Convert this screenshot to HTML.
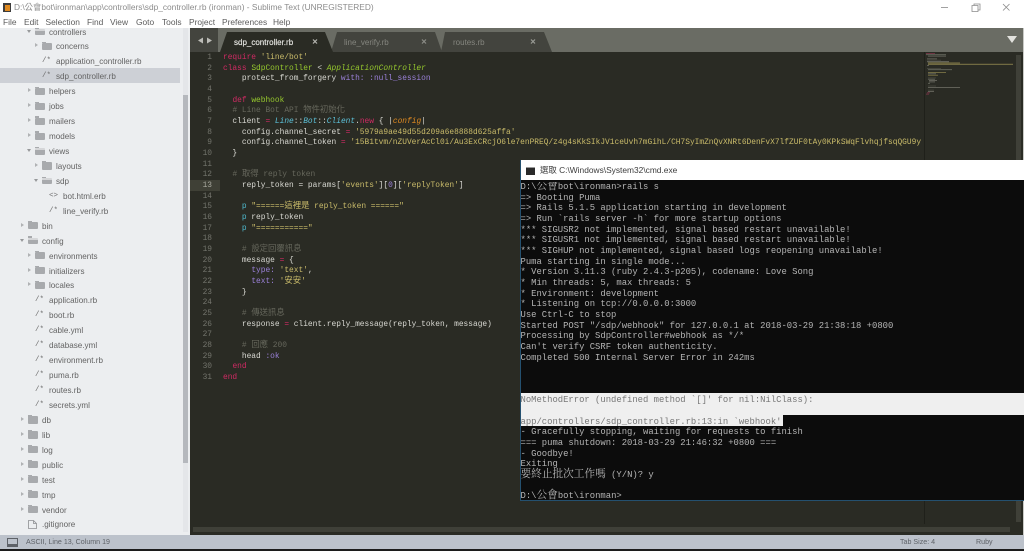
<!DOCTYPE html>
<html><head><meta charset="utf-8"><title>Sublime Text</title>
<style>
html,body{margin:0;padding:0;background:#1c1c1c}
#w{position:relative;width:1024px;height:551px;overflow:hidden;filter:blur(.3px);background:#1c1c1c;font-family:"Liberation Sans","Noto Sans CJK TC",sans-serif}
.a{position:absolute}
#title{left:0;top:0;width:1024px;height:28px;background:#fff}
.m{position:absolute;top:16.500px;font-size:8.4px;line-height:11px;color:#5c5c5c}
#side{left:0;top:28px;width:190px;height:507px;background:#eceef0;overflow:hidden}
#sl{position:absolute;left:0;top:-4.5px;width:190px;font-size:8.1px;color:#636363}
.r{position:relative;height:14.94px;line-height:17.9px;padding-left:var(--x);white-space:pre}
.g{position:absolute;left:calc(var(--x) - 14px);top:0;font-family:"Liberation Mono",monospace;font-size:7.5px;color:#6c6c6c}
.fd{position:absolute;left:calc(var(--x) - 14px);top:4.5px;width:9.5px;height:7.2px;background:#a8aaad;border-radius:1px}
.fd:before{content:"";position:absolute;left:0;top:-1.2px;width:4px;height:1.5px;background:#a8aaad}
.fo{position:absolute;left:calc(var(--x) - 14px);top:5px;width:9.5px;height:6.5px;background:linear-gradient(#d5d6d8 30%,#a8aaad 30%);border-radius:1px}
.fo:before{content:"";position:absolute;left:0;top:-1.2px;width:4px;height:1.5px;background:#a8aaad}
.tr{position:absolute;left:calc(var(--x) - 21.5px);top:5px;border-left:3.5px solid #b0b2b4;border-top:2.5px solid transparent;border-bottom:2.5px solid transparent}
.td{position:absolute;left:calc(var(--x) - 22.5px);top:6px;border-top:3.5px solid #96989a;border-left:2.5px solid transparent;border-right:2.5px solid transparent}
#ed{left:190px;top:52px;width:834px;height:483px;background:#2a2b24}
#code,#nums{position:absolute;margin:0;font-family:"Liberation Mono","Noto Sans CJK TC",monospace;font-size:7.87px;line-height:10.667px;white-space:pre}
#code{left:223px;top:53px;width:701px;height:340px;overflow:hidden;color:#d8d8d2}
#nums{left:195px;top:53px;width:17px;text-align:right;color:#73746c}
.cj{font-family:"Noto Sans CJK TC",sans-serif;font-size:8.4px;line-height:0}
.k{color:#cf2a63}.s{color:#c9bb6a}.c{color:#66675c}.n{color:#96c82e}.i{color:#5cc0d8;font-style:italic}.i2{color:#96c82e;font-style:italic}.o{color:#cf2a63}.p{color:#9a80d8}.t{color:#4fb8cc}.v{color:#e08a20;font-style:italic}.b{color:#4fb8cc}
#term{left:520px;top:160px;width:504px;height:341px;background:#0c0c0c;border-left:1px solid #24506f;border-bottom:1px solid #24506f;box-sizing:border-box}
#out{position:absolute;left:520.5px;top:182.1px;margin:0;font-family:"Liberation Mono","Noto Sans CJK TC",monospace;font-size:8.88px;line-height:10.65px;color:#b4b4b4;white-space:pre;width:503px;overflow:hidden}
.z{font-family:"Noto Serif CJK SC","Noto Sans CJK TC",serif;font-size:10.67px;line-height:0}
.sel{color:#777}
#st{left:0;top:535px;width:1024px;height:14px;background:#bcc2cb;color:#5e6268;font-size:7.1px;line-height:14px}
</style></head><body><div id="w">

<div class="a" id="title"></div>
<div class="a" style="left:3px;top:3px;width:8px;height:9px;background:#3d3d3d"></div>
<div class="a" style="left:4.5px;top:4.5px;width:5px;height:6px;background:#e08a20"></div>
<div class="a" style="left:14px;top:2px;font-size:8.35px;line-height:11px;color:#8c8c8c;white-space:pre">D:\公會bot\ironman\app\controllers\sdp_controller.rb (ironman) - Sublime Text (UNREGISTERED)</div>
<span class="m" style="left:3px">File</span><span class="m" style="left:24px">Edit</span><span class="m" style="left:45.500px">Selection</span><span class="m" style="left:87px">Find</span><span class="m" style="left:110px">View</span><span class="m" style="left:136px">Goto</span><span class="m" style="left:162px">Tools</span><span class="m" style="left:189px">Project</span><span class="m" style="left:222px">Preferences</span><span class="m" style="left:273px">Help</span>
<svg class="a" style="left:935px;top:0" width="85" height="15" fill="none" stroke="#8a8a8a" stroke-width=".8"><path d="M6 7.5h7"/><path d="M37 5.5h6v6h-6zM39 5.5v-1.500h6v6h-2"/><path d="M68 4l6.500 6.500M74.500 4L68 10.500"/></svg>

<div class="a" id="side"><div id="sl">
<div class="r" style="--x:49px"><i class="td"></i><i class="fo"></i>controllers</div>
<div class="r" style="--x:56px"><i class="tr"></i><i class="fd"></i>concerns</div>
<div class="r" style="--x:56px"><span class="g">/*</span>application_controller.rb</div>
<div class="r" style="--x:56px;background:#cdd0d6;width:124px"><span class="g">/*</span>sdp_controller.rb</div>
<div class="r" style="--x:49px"><i class="tr"></i><i class="fd"></i>helpers</div>
<div class="r" style="--x:49px"><i class="tr"></i><i class="fd"></i>jobs</div>
<div class="r" style="--x:49px"><i class="tr"></i><i class="fd"></i>mailers</div>
<div class="r" style="--x:49px"><i class="tr"></i><i class="fd"></i>models</div>
<div class="r" style="--x:49px"><i class="td"></i><i class="fo"></i>views</div>
<div class="r" style="--x:56px"><i class="tr"></i><i class="fd"></i>layouts</div>
<div class="r" style="--x:56px"><i class="td"></i><i class="fo"></i>sdp</div>
<div class="r" style="--x:63px"><span class="g">&lt;&gt;</span>bot.html.erb</div>
<div class="r" style="--x:63px"><span class="g">/*</span>line_verify.rb</div>
<div class="r" style="--x:42px"><i class="tr"></i><i class="fd"></i>bin</div>
<div class="r" style="--x:42px"><i class="td"></i><i class="fo"></i>config</div>
<div class="r" style="--x:49px"><i class="tr"></i><i class="fd"></i>environments</div>
<div class="r" style="--x:49px"><i class="tr"></i><i class="fd"></i>initializers</div>
<div class="r" style="--x:49px"><i class="tr"></i><i class="fd"></i>locales</div>
<div class="r" style="--x:49px"><span class="g">/*</span>application.rb</div>
<div class="r" style="--x:49px"><span class="g">/*</span>boot.rb</div>
<div class="r" style="--x:49px"><span class="g">/*</span>cable.yml</div>
<div class="r" style="--x:49px"><span class="g">/*</span>database.yml</div>
<div class="r" style="--x:49px"><span class="g">/*</span>environment.rb</div>
<div class="r" style="--x:49px"><span class="g">/*</span>puma.rb</div>
<div class="r" style="--x:49px"><span class="g">/*</span>routes.rb</div>
<div class="r" style="--x:49px"><span class="g">/*</span>secrets.yml</div>
<div class="r" style="--x:42px"><i class="tr"></i><i class="fd"></i>db</div>
<div class="r" style="--x:42px"><i class="tr"></i><i class="fd"></i>lib</div>
<div class="r" style="--x:42px"><i class="tr"></i><i class="fd"></i>log</div>
<div class="r" style="--x:42px"><i class="tr"></i><i class="fd"></i>public</div>
<div class="r" style="--x:42px"><i class="tr"></i><i class="fd"></i>test</div>
<div class="r" style="--x:42px"><i class="tr"></i><i class="fd"></i>tmp</div>
<div class="r" style="--x:42px"><i class="tr"></i><i class="fd"></i>vendor</div>
<div class="r" style="--x:42px"><svg style="position:absolute;left:28px;top:3.500px" width="9" height="9" fill="none" stroke="#8d8f92" stroke-width=".8"><path d="M.5.500h5l3 3v5h-8zM5.500.500v3h3"/></svg>.gitignore</div>
</div>
<div class="a" style="left:183px;top:0;width:5px;height:504px;background:#e4e6e9"></div>
<div class="a" style="left:183px;top:67px;width:5px;height:368px;background:#b5b8bd"></div>
</div>

<div class="a" style="left:190px;top:28px;width:834px;height:24px;background:#6a6c64"></div>
<div class="a" style="left:190px;top:28px;width:28px;height:24px;background:#43443e"></div>
<svg class="a" style="left:190px;top:28px" width="400" height="24">
<path d="M147 4H245L252 24H141Z" fill="#43443e"/>
<path d="M255 4H354L362 24H251Z" fill="#43443e"/>
<path d="M37 4H135L143 24H30Z" fill="#2a2b24"/>
<path d="M8 12.500L13 9.500V15.500ZM22 12.500L17 9.500V15.500Z" fill="#bdbdb8"/>
<path d="M123 11.500l4 4M127 11.500l-4 4" stroke="#b5b5b0" stroke-width="1.200"/>
<path d="M232 11.500l4 4M236 11.500l-4 4" stroke="#8b8c86" stroke-width="1.200"/>
<path d="M341 11.500l4 4M345 11.500l-4 4" stroke="#9a9b95" stroke-width="1.200"/>
</svg>
<div class="a" style="left:234px;top:36.500px;font-size:8px;line-height:11px;color:#e6e6e2;-webkit-text-stroke:.15px #e6e6e2">sdp_controller.rb</div>
<div class="a" style="left:344px;top:36.500px;font-size:8px;line-height:11px;color:#85867f">line_verify.rb</div>
<div class="a" style="left:453px;top:36.500px;font-size:8px;line-height:11px;color:#85867f">routes.rb</div>
<svg class="a" style="left:1007px;top:36px" width="11" height="8"><path d="M0 0H10L5 7Z" fill="#e2e2de"/></svg>

<div class="a" id="ed"></div>
<div class="a" style="left:190px;top:180px;width:30px;height:10.700px;background:#3f4036"></div>
<pre id="nums">1
2
3
4
5
6
7
8
9
10
11
12
<span style="color:#a8a89e">13</span>
14
15
16
17
18
19
20
21
22
23
24
25
26
27
28
29
30
31</pre>
<pre id="code"><span class="k">require</span> <span class="s">'line/bot'</span>
<span class="k">class</span> <span class="n">SdpController</span> &lt; <span class="i2">ApplicationController</span>
    protect_from_forgery <span class="p">with:</span> <span class="p">:null_session</span>

  <span class="k">def</span> <span class="n">webhook</span>
  <span class="c"># Line Bot API <span class="cj">物件初始化</span></span>
  client <span class="o">=</span> <span class="i">Line</span>::<span class="i">Bot</span>::<span class="i">Client</span>.<span class="k">new</span> { |<span class="v">config</span>|
    config.channel_secret <span class="o">=</span> <span class="s">'5979a9ae49d55d209a6e8888d625affa'</span>
    config.channel_token <span class="o">=</span> <span class="s">'15B1tvm/nZUVerAcCl0i/Au3ExCRcjO6le7enPREQ/z4g4sKkSIkJV1ceUvh7mGihL/CH7SyImZnQvXNRt6DenFvX7lfZUF0tAy0KPkSWqFlvhqjfsqQGU9y</span>
  }

  <span class="c"># <span class="cj">取得</span> reply token</span>
    reply_token = params[<span class="s">'events'</span>][<span class="p">0</span>][<span class="s">'replyToken'</span>]

    <span class="b">p</span> <span class="s">"======<span class="cj">這裡是</span> reply_token ======"</span>
    <span class="b">p</span> reply_token
    <span class="b">p</span> <span class="s">"==========="</span>

    <span class="c"># <span class="cj">設定回覆訊息</span></span>
    message <span class="o">=</span> {
      <span class="p">type:</span> <span class="s">'text'</span>,
      <span class="p">text:</span> <span class="s">'<span class="cj">安安</span>'</span>
    }

    <span class="c"># <span class="cj">傳送訊息</span></span>
    response <span class="o">=</span> client.reply_message(reply_token, message)

    <span class="c"># <span class="cj">回應</span> 200</span>
    head <span class="p">:ok</span>
  <span class="k">end</span>
<span class="k">end</span></pre>

<div class="a" style="left:924px;top:52px;width:1px;height:472px;background:#1f201a"></div>
<svg class="a" style="left:925px;top:52px;opacity:.7" width="90" height="46">
<g fill="#8a8b80"><rect x="1" y="1" width="9" height=".8" fill="#a03a58"/><rect x="1" y="2.300" width="20" height=".8"/><rect x="3" y="3.700" width="18" height=".8"/><rect x="2" y="6.500" width="10" height=".8"/><rect x="2" y="7.800" width="14" height=".8" fill="#55564c"/><rect x="2" y="9.200" width="22" height="1"/><rect x="3" y="10.500" width="32" height="1" fill="#a89c58"/><rect x="3" y="11.800" width="85" height="1" fill="#a89c58"/><rect x="2" y="13.200" width="2" height=".8"/><rect x="2" y="16" width="14" height=".8" fill="#55564c"/><rect x="3" y="17.300" width="24" height=".8"/><rect x="3" y="20" width="18" height=".8" fill="#a89c58"/><rect x="3" y="21.400" width="8" height=".8"/><rect x="3" y="22.800" width="10" height=".8" fill="#a89c58"/><rect x="3" y="25.500" width="8" height=".8" fill="#55564c"/><rect x="3" y="26.800" width="7" height=".8"/><rect x="4" y="28.200" width="8" height=".8"/><rect x="4" y="29.500" width="6" height=".8"/><rect x="3" y="30.900" width="2" height=".8"/><rect x="3" y="33.600" width="8" height=".8" fill="#55564c"/><rect x="3" y="35" width="32" height=".8"/><rect x="3" y="37.700" width="6" height=".8" fill="#55564c"/><rect x="3" y="39" width="6" height=".8"/><rect x="2" y="40.400" width="3" height=".8" fill="#a03a58"/><rect x="1" y="41.700" width="3" height=".8" fill="#a03a58"/></g>
</svg>
<div class="a" style="left:1016px;top:55px;width:5px;height:467px;background:#3f4038"></div>
<div class="a" style="left:193px;top:527px;width:817px;height:5px;background:#3f4038"></div>
<div class="a" style="left:1023px;top:28px;width:1px;height:507px;background:#c9cac6"></div>

<div class="a" id="term"></div>
<div class="a" style="left:521px;top:160px;width:503px;height:20px;background:#fff"></div>
<div class="a" style="left:526px;top:167px;width:9px;height:7px;background:#2a2a2a;border-top:1.500px solid #9a9a9a"></div>
<div class="a" style="left:540px;top:165px;font-size:8.4px;line-height:11px;color:#3c3c3c;white-space:pre">選取 C:\Windows\System32\cmd.exe</div>
<div class="a" style="left:521px;top:393px;width:503px;height:22px;background:#efefef"></div>
<div class="a" style="left:521px;top:415px;width:262px;height:10.700px;background:#efefef"></div>
<pre class="a" id="out">D:\<span class="z">公會</span>bot\ironman&gt;rails s
=&gt; Booting Puma
=&gt; Rails 5.1.5 application starting in development
=&gt; Run `rails server -h` for more startup options
*** SIGUSR2 not implemented, signal based restart unavailable!
*** SIGUSR1 not implemented, signal based restart unavailable!
*** SIGHUP not implemented, signal based logs reopening unavailable!
Puma starting in single mode...
* Version 3.11.3 (ruby 2.4.3-p205), codename: Love Song
* Min threads: 5, max threads: 5
* Environment: development
* Listening on tcp://0.0.0.0:3000
Use Ctrl-C to stop
Started POST "/sdp/webhook" for 127.0.0.1 at 2018-03-29 21:38:18 +0800
Processing by SdpController#webhook as */*
Can't verify CSRF token authenticity.
Completed 500 Internal Server Error in 242ms



<span class="sel">NoMethodError (undefined method `[]' for nil:NilClass):</span>

<span class="sel">app/controllers/sdp_controller.rb:13:in `webhook'</span>
- Gracefully stopping, waiting for requests to finish
=== puma shutdown: 2018-03-29 21:46:32 +0800 ===
- Goodbye!
Exiting
<span class="z">要終止批次工作嗎</span> (Y/N)? y

D:\<span class="z">公會</span>bot\ironman&gt;</pre>

<div class="a" id="st"><svg class="a" style="left:7px;top:2.500px" width="12" height="10"><rect x=".5" y=".5" width="10" height="8" fill="none" stroke="#5e6268"/><rect x=".5" y="6" width="10" height="3" fill="#5e6268"/></svg><span class="a" style="left:26px;top:0;white-space:pre">ASCII, Line 13, Column 19</span><span class="a" style="left:900px;top:0;white-space:pre">Tab Size: 4</span><span class="a" style="left:976px;top:0">Ruby</span></div>

</div></body></html>
